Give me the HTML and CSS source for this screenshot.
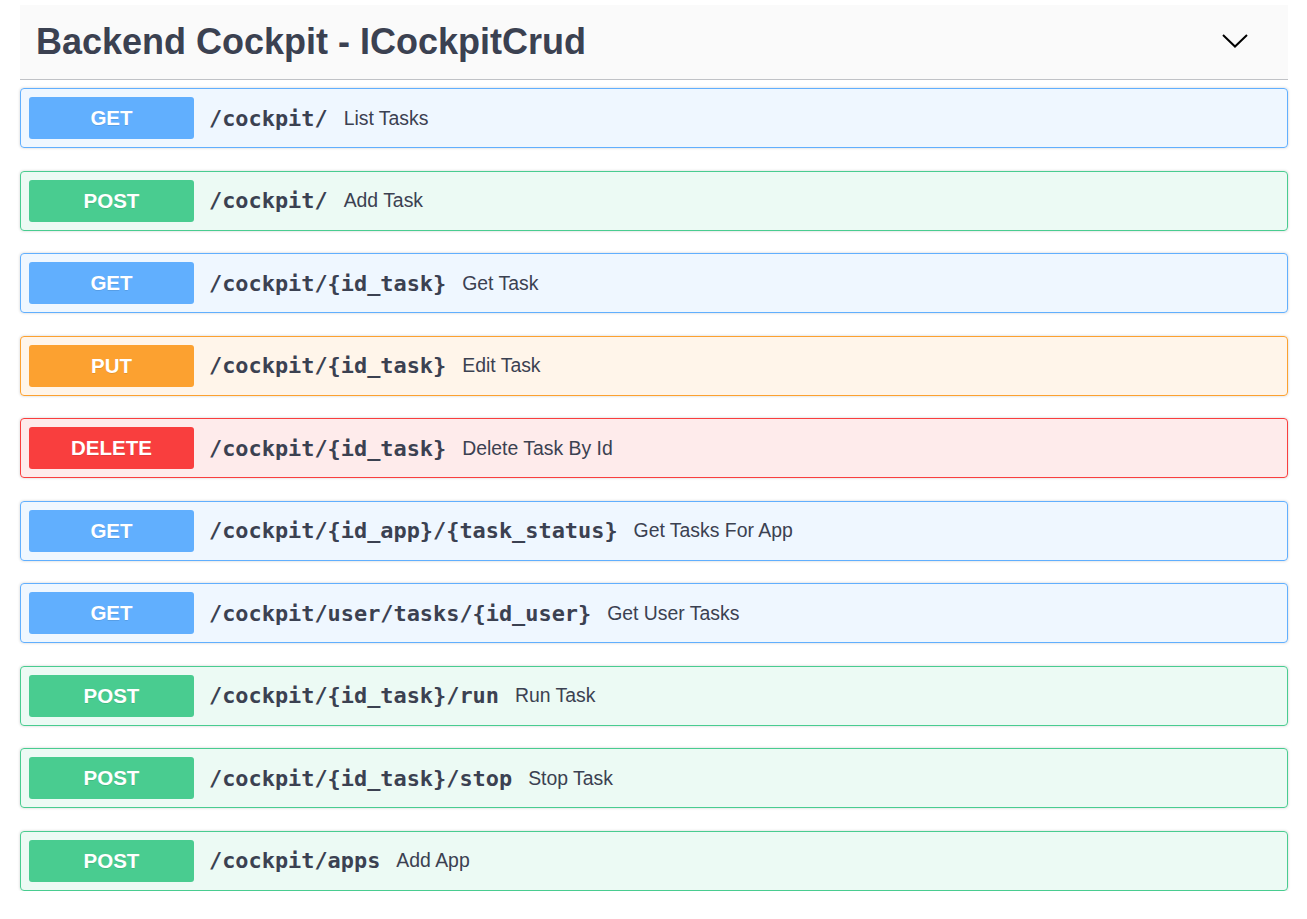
FILE: index.html
```html
<!DOCTYPE html>
<html lang="en">
<head>
<meta charset="utf-8">
<title>Backend Cockpit - ICockpitCrud</title>
<link rel="stylesheet" href="styles.css">
</head>
<body>
<div class="wrapper">
  <div class="tag-header">
    <h3 class="tag-title">Backend Cockpit - ICockpitCrud</h3>
    <svg class="chevron" width="26" height="14" viewBox="0 0 26 14"><path d="M1 1 L13 12.5 L25 1" fill="none" stroke="#000" stroke-width="2"/></svg>
  </div>
  <div class="ops">
    <div class="op get"><span class="method">GET</span><span class="path">/cockpit/</span><span class="desc">List Tasks</span></div>
    <div class="op post"><span class="method">POST</span><span class="path">/cockpit/</span><span class="desc">Add Task</span></div>
    <div class="op get"><span class="method">GET</span><span class="path">/cockpit/{id_task}</span><span class="desc">Get Task</span></div>
    <div class="op put"><span class="method">PUT</span><span class="path">/cockpit/{id_task}</span><span class="desc">Edit Task</span></div>
    <div class="op delete"><span class="method">DELETE</span><span class="path">/cockpit/{id_task}</span><span class="desc">Delete Task By Id</span></div>
    <div class="op get"><span class="method">GET</span><span class="path">/cockpit/{id_app}/{task_status}</span><span class="desc">Get Tasks For App</span></div>
    <div class="op get"><span class="method">GET</span><span class="path">/cockpit/user/tasks/{id_user}</span><span class="desc">Get User Tasks</span></div>
    <div class="op post"><span class="method">POST</span><span class="path">/cockpit/{id_task}/run</span><span class="desc">Run Task</span></div>
    <div class="op post"><span class="method">POST</span><span class="path">/cockpit/{id_task}/stop</span><span class="desc">Stop Task</span></div>
    <div class="op post"><span class="method">POST</span><span class="path">/cockpit/apps</span><span class="desc">Add App</span></div>
  </div>
</div>
</body>
</html>
```

FILE: styles.css
```css
html, body {
  margin: 0;
  padding: 0;
  background: #fff;
  font-family: "Liberation Sans", Arial, sans-serif;
  color: #3b4151;
}

.wrapper {
  padding: 5px 19px 0 20px;
}

.tag-header {
  display: flex;
  align-items: center;
  justify-content: space-between;
  height: 74px;
  padding: 0 40px 0 16px;
  background: #fafafa;
  border-bottom: 1px solid rgba(59, 65, 81, 0.3);
}

.tag-title {
  margin: 0;
  font-size: 36px;
  font-weight: 700;
  color: #3b4151;
}

.chevron {
  display: block;
  margin-top: -2px;
}

.ops {
  display: flex;
  flex-direction: column;
  gap: 22.5px;
  padding-top: 8px;
}

.op {
  display: flex;
  align-items: center;
  height: 58px;
  padding: 0 8px;
  border: 1px solid;
  border-radius: 4px;
  box-shadow: 0 0 3px rgba(0, 0, 0, 0.19);
}

.method {
  display: flex;
  align-items: center;
  justify-content: center;
  width: 165px;
  height: 42px;
  flex: none;
  border-radius: 3px;
  color: #fff;
  font-size: 20.5px;
  font-weight: 700;
  text-shadow: 0 1px 0 rgba(0, 0, 0, 0.1);
}

.path {
  margin-left: 15px;
  font-family: "DejaVu Sans Mono", monospace;
  font-weight: 700;
  font-size: 21.9px;
  color: #3b4151;
}

.desc {
  margin-left: 16px;
  font-size: 19.4px;
  color: #3b4151;
}

.get { background: rgba(97, 175, 254, 0.1); border-color: #61affe; }
.get .method { background: #61affe; }
.post { background: rgba(73, 204, 144, 0.1); border-color: #49cc90; }
.post .method { background: #49cc90; }
.put { background: rgba(252, 161, 48, 0.1); border-color: #fca130; }
.put .method { background: #fca130; }
.delete { background: rgba(249, 62, 62, 0.1); border-color: #f93e3e; }
.delete .method { background: #f93e3e; }
```
